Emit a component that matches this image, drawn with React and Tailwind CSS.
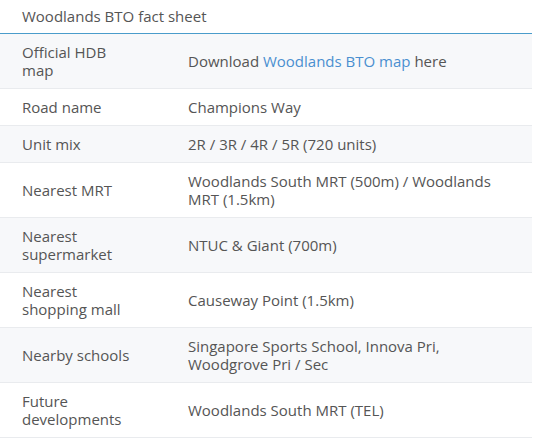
const rows = [
  { label: 'Official HDB map', value: (
    <>
      Download <a href="#" className="text-[#4a8fd0]">Woodlands BTO map</a> here
    </>
  ) },
  { label: 'Road name', value: 'Champions Way' },
  { label: 'Unit mix', value: '2R / 3R / 4R / 5R (720 units)' },
  { label: 'Nearest MRT', value: 'Woodlands South MRT (500m) / Woodlands MRT (1.5km)' },
  { label: 'Nearest supermarket', value: 'NTUC & Giant (700m)' },
  { label: 'Nearest shopping mall', value: 'Causeway Point (1.5km)' },
  { label: 'Nearby schools', value: 'Singapore Sports School, Innova Pri, Woodgrove Pri / Sec' },
  { label: 'Future developments', value: 'Woodlands South MRT (TEL)' },
];

export default function App() {
  return (
    <div className="min-h-[441px] w-[534px] bg-white font-['Open_Sans',sans-serif] text-[15px] leading-[18px] text-[#555]">
      <div className="w-[532px]">
        <div className="h-[34px] border-b-[1.5px] border-[#4a9ccb] pl-[22px] pt-[7px]">
          Woodlands BTO fact sheet
        </div>
        {rows.map((r, i) => (
          <div
            key={i}
            className={`flex items-center border-b border-[#e9ebee] py-[9px] ${i % 2 === 0 ? 'bg-[#f7f8fa]' : 'bg-white'}`}
          >
            <div className="w-[188px] shrink-0 pl-[22px] pr-[52px]">{r.label}</div>
            <div className="w-[335px] shrink-0">{r.value}</div>
          </div>
        ))}
      </div>
    </div>
  );
}
